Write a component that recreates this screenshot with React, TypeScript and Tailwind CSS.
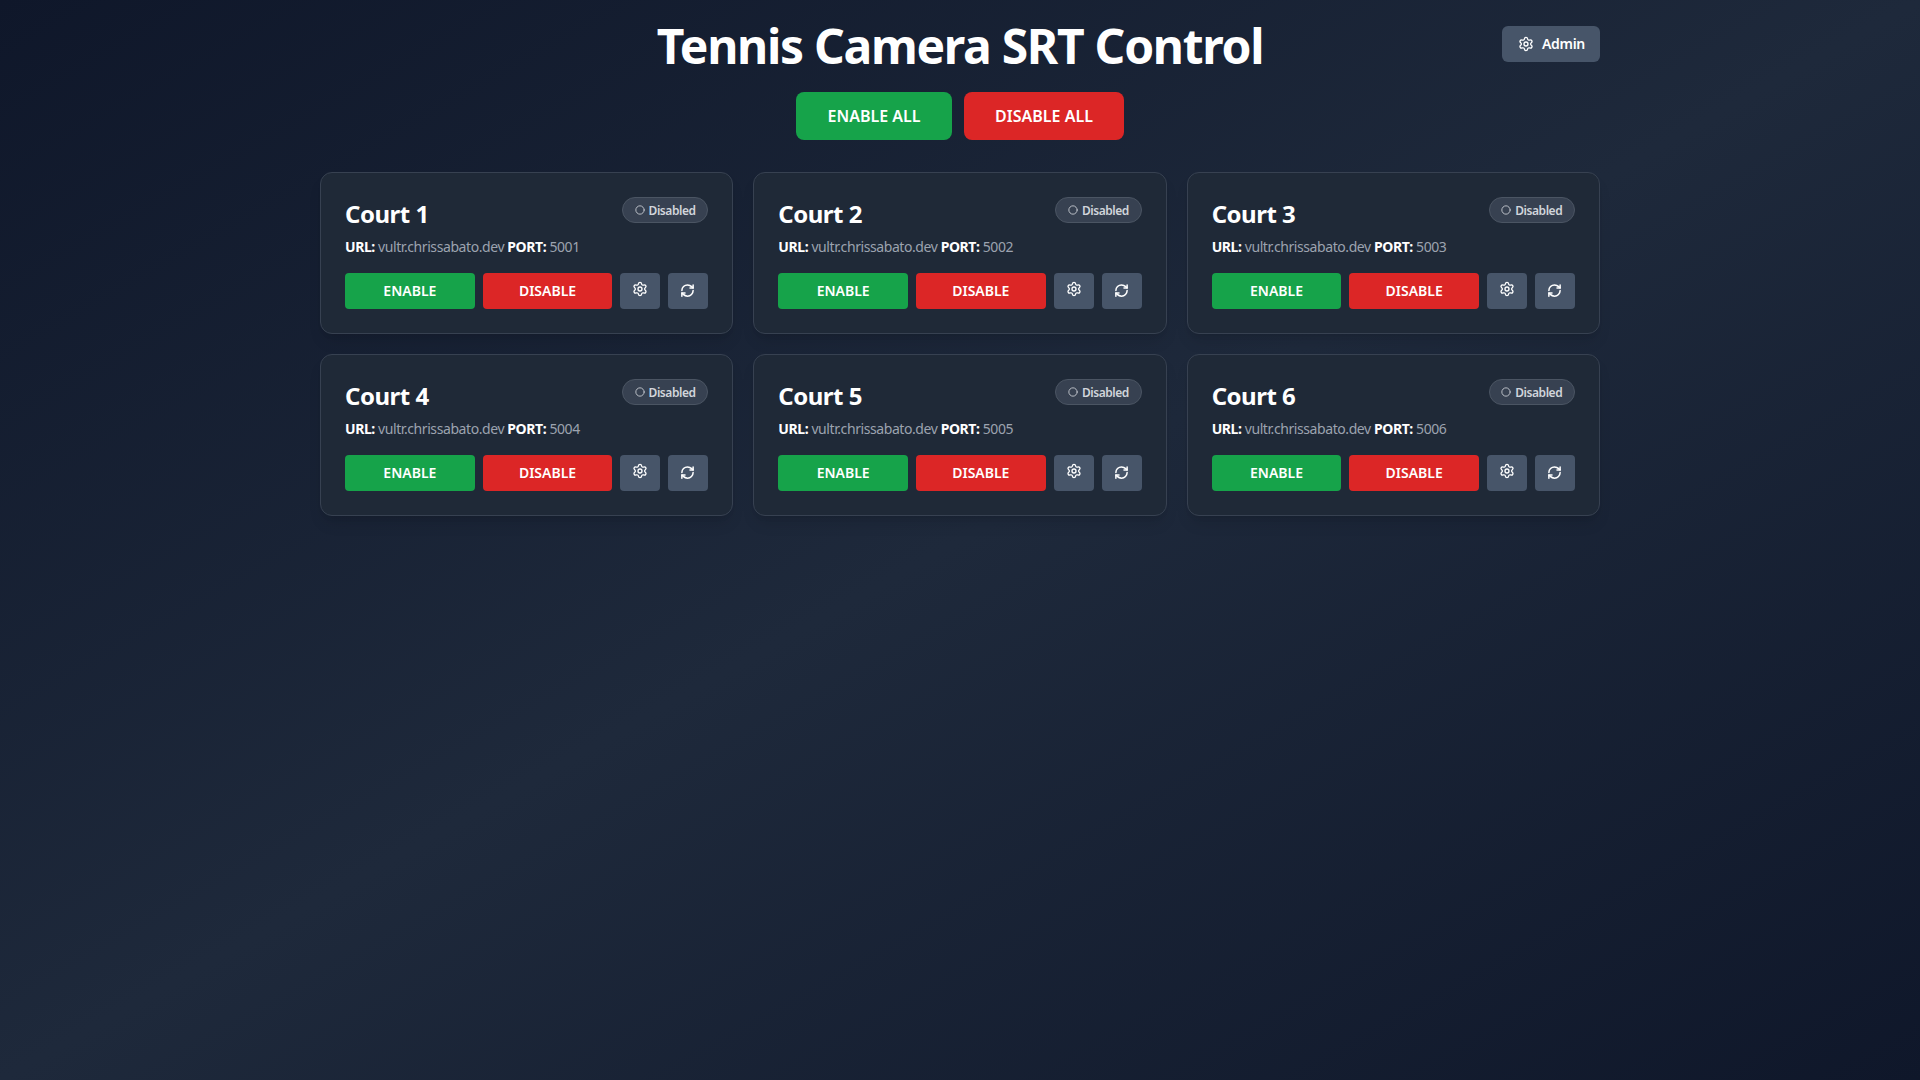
import { Settings, RefreshCw, Circle } from "lucide-react";

const courts = [1, 2, 3, 4, 5, 6];

function CourtCard({ n }: { n: number }) {
  return (
    <div className="rounded-xl border border-[#374151] bg-[#1f2937] p-6 shadow-lg">
      <div className="flex items-start justify-between h-[38px]">
        <h2 className="text-2xl font-bold leading-8 mt-[1px] tracking-[-0.5px] text-white">Court {n}</h2>
        <span className="flex h-[26px] w-[86.5px] items-center justify-center gap-1 rounded-full border border-[#4b5563] bg-[#374151] pt-[2px] text-xs font-semibold tracking-[-0.45px] text-[#d1d5db]">
          <Circle size={10} strokeWidth={2} className="-mt-[2px]" />
          Disabled
        </span>
      </div>
      <p className="h-[38px] pt-[2px] text-sm leading-5 tracking-[-0.42px] text-[#9ca3af]">
        <strong className="font-bold text-white">URL:</strong> vultr.chrissabato.dev{" "}
        <strong className="font-bold text-white">PORT:</strong> {5000 + n}
      </p>
      <div className="flex gap-2">
        <button className="flex h-9 flex-1 items-center justify-center rounded bg-[#16a34a] text-sm font-semibold text-white">ENABLE</button>
        <button className="flex h-9 flex-1 items-center justify-center rounded bg-[#dc2626] text-sm font-semibold text-white">DISABLE</button>
        <button className="flex h-9 w-10 items-center justify-center rounded bg-[#475569] pb-[4px] text-white"><Settings size={16} /></button>
        <button className="flex h-9 w-10 items-center justify-center rounded bg-[#475569] pb-[1px] pr-[1px] text-white"><RefreshCw size={15} strokeWidth={2.4} /></button>
      </div>
    </div>
  );
}

export default function App() {
  return (
    <div className="min-h-screen bg-gradient-to-br from-[#0f172a] via-[#1e293b] to-[#0f172a] font-['Noto_Sans',sans-serif]">
      <div className="mx-auto w-[1280px] pt-5">
        <header className="relative flex flex-col items-center">
          <h1 className="text-5xl font-bold leading-[52px] tracking-[-1.3px] text-white">Tennis Camera SRT Control</h1>
          <button className="absolute right-0 top-[6px] flex h-9 w-[98px] items-center justify-center gap-2 rounded-md bg-[#475569] pl-[1px] text-sm font-semibold tracking-[-0.3px] text-white">
            <Settings size={16} />
            Admin
          </button>
          <div className="mt-5 flex gap-3">
            <button className="h-12 w-[156px] rounded-lg bg-[#16a34a] font-semibold text-white">ENABLE ALL</button>
            <button className="h-12 w-[160px] rounded-lg bg-[#dc2626] font-semibold text-white">DISABLE ALL</button>
          </div>
        </header>
        <main className="mt-8 grid grid-cols-3 gap-5">
          {courts.map((n) => (
            <CourtCard key={n} n={n} />
          ))}
        </main>
      </div>
    </div>
  );
}
